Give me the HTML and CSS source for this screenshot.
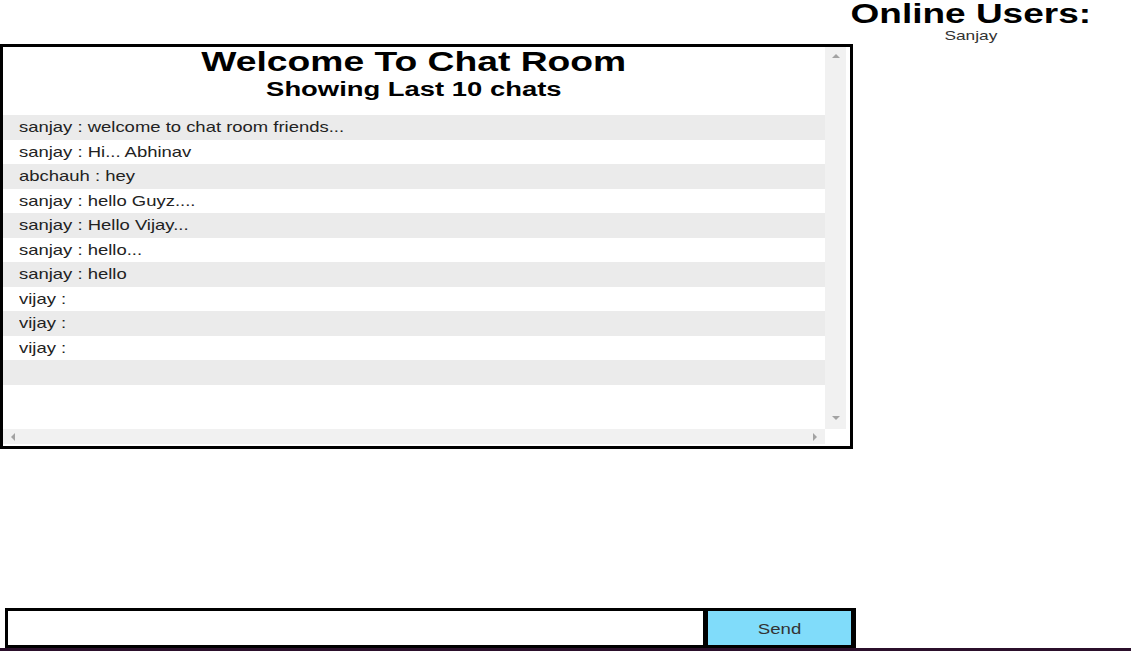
FILE: index.html
```html
<!DOCTYPE html>
<html>
<head>
<meta charset="utf-8">
<link rel="stylesheet" href="styles.css">
</head>
<body>
<div class="page">
  <div class="left">
    <div class="chatbox">
      <div class="chat-content">
        <div class="chat-head">
          <h1 class="title"><span class="wide">Welcome To Chat Room</span></h1>
          <h2 class="subtitle"><span class="wide wider">Showing Last 10 chats</span></h2>
        </div>
        <div class="rows">
          <div class="row"><span class="rtext">sanjay : welcome to chat room friends...</span></div>
          <div class="row"><span class="rtext">sanjay : Hi... Abhinav</span></div>
          <div class="row"><span class="rtext">abchauh : hey</span></div>
          <div class="row"><span class="rtext">sanjay : hello Guyz....</span></div>
          <div class="row"><span class="rtext">sanjay : Hello Vijay...</span></div>
          <div class="row"><span class="rtext">sanjay : hello...</span></div>
          <div class="row"><span class="rtext">sanjay : hello</span></div>
          <div class="row"><span class="rtext">vijay :</span></div>
          <div class="row"><span class="rtext">vijay :</span></div>
          <div class="row"><span class="rtext">vijay :</span></div>
          <div class="row"></div>
        </div>
      </div>
      <div class="vbar">
        <span class="arrow up"></span>
        <span class="arrow down"></span>
      </div>
      <div class="hbar">
        <span class="arrow lefta"></span>
        <span class="arrow righta"></span>
      </div>
      <div class="corner"></div>
    </div>
    <div class="sendform">
      <input class="msg" type="text">
      <button class="send"><span class="btext">Send</span></button>
    </div>
  </div>
  <div class="right">
    <h2 class="online-title"><span class="wide wider">Online Users:</span></h2>
    <div class="user"><span class="wide">Sanjay</span></div>
  </div>
</div>
<div class="taskbar"></div>
</body>
</html>
```
FILE: styles.css
```css
html, body {
  margin: 0;
  padding: 0;
  background: #fff;
  font-family: "Liberation Sans", Arial, sans-serif;
}
.page {
  display: flex;
  height: 648px;
}
.left {
  width: 857px;
  display: flex;
  flex-direction: column;
  padding-top: 44px;
  box-sizing: border-box;
}
.wide {
  display: inline-block;
  transform: scaleX(1.33);
  transform-origin: center;
}
.wider {
  transform: scaleX(1.37);
}
.chatbox {
  width: 853px;
  height: 405px;
  box-sizing: border-box;
  border: 3px solid #000;
  display: grid;
  grid-template-columns: 822px 21px;
  grid-template-rows: 382px 15px;
  padding: 0 4px 2px 0;
  overflow: hidden;
}
.chat-content {
  overflow: hidden;
}
.chat-head {
  height: 68px;
  text-align: center;
}
.title {
  margin: 0;
  font-size: 28px;
  line-height: 28px;
  padding-top: 1px;
  font-weight: bold;
  color: #000;
}
.subtitle {
  margin: 0;
  font-size: 20px;
  line-height: 26px;
  font-weight: bold;
  color: #000;
}
.row {
  height: 24.5px;
  line-height: 24.5px;
  padding-left: 16px;
  font-size: 15px;
  color: #222;
}
.rtext {
  display: inline-block;
  transform: scaleX(1.23);
  transform-origin: left center;
}
.row:nth-child(odd) {
  background: #ebebeb;
}
.vbar {
  background: #f1f1f1;
  display: flex;
  flex-direction: column;
  justify-content: space-between;
  align-items: center;
  padding: 7px 0 9px;
}
.hbar {
  background: #f1f1f1;
  display: flex;
  justify-content: space-between;
  align-items: center;
  padding: 0 8px 0 8px;
}
.corner {
  background: #fff;
}
.arrow {
  width: 0;
  height: 0;
  display: block;
}
.up {
  border-left: 4px solid transparent;
  border-right: 4px solid transparent;
  border-bottom: 4px solid #a3a3a3;
}
.down {
  border-left: 4px solid transparent;
  border-right: 4px solid transparent;
  border-top: 4px solid #a3a3a3;
}
.lefta {
  border-top: 4px solid transparent;
  border-bottom: 4px solid transparent;
  border-right: 4px solid #a3a3a3;
}
.righta {
  border-top: 4px solid transparent;
  border-bottom: 4px solid transparent;
  border-left: 4px solid #a3a3a3;
}
.sendform {
  margin-top: auto;
  margin-left: 5px;
  width: 851px;
  height: 40px;
  box-sizing: border-box;
  border: 3px solid #000;
  display: flex;
}
.msg {
  flex: 0 0 700px;
  box-sizing: border-box;
  border: 0;
  border-right: 5px solid #000;
  margin: 0;
  padding: 0 6px;
  font-size: 15px;
  font-family: "Liberation Sans", Arial, sans-serif;
  outline: none;
  background: #fff;
}
.send {
  flex: 1;
  border: 0;
  border-right: 2px solid #000;
  margin: 0;
  background: #80dcfa;
  color: #333;
  font-size: 15px;
  font-family: "Liberation Sans", Arial, sans-serif;
  padding: 0;
}
.btext {
  display: inline-block;
  transform: scaleX(1.24);
}
.right {
  width: 228px;
  display: flex;
  flex-direction: column;
  align-items: center;
}
.online-title {
  margin: 0;
  font-size: 27px;
  line-height: 28px;
  font-weight: bold;
  white-space: nowrap;
  color: #000;
}
.user {
  font-size: 13px;
  line-height: 16px;
  color: #333;
}
.taskbar {
  height: 3px;
  background: #2b0f2b;
}
```
